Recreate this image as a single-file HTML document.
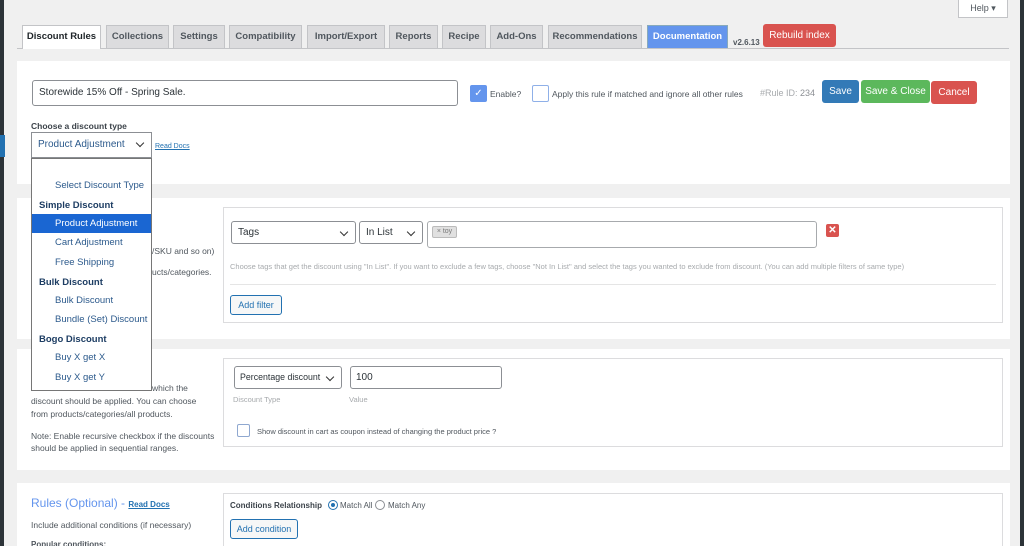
<!DOCTYPE html>
<html><head><meta charset="utf-8"><style>
*{box-sizing:border-box;margin:0;padding:0}
html,body{width:1024px;height:546px;overflow:hidden}
body{background:#f0f0f0;font-family:"Liberation Sans",sans-serif;position:relative;color:#3c434a}
.a{position:absolute}
.tab{position:absolute;top:25px;height:23px;background:#dcdcde;border:1px solid #c3c4c7;border-bottom:none;font-size:9.5px;font-weight:bold;color:#50575e;text-align:center;line-height:22px;white-space:nowrap}
.panel{position:absolute;left:17px;width:993px;background:#fff}
.box{position:absolute;left:223px;width:780px;border:1px solid #dcdcde;background:#fff}
.sel{position:absolute;border:1px solid #8c8f94;border-radius:3px;background:#fff;font-size:10px;color:#2c3338;padding-left:6px;line-height:21px;white-space:nowrap;overflow:hidden}
.sel:after{content:"";position:absolute;right:8px;top:7px;width:5px;height:5px;border-right:1.5px solid #333;border-bottom:1.5px solid #333;transform:rotate(45deg)}
.btn{position:absolute;border-radius:3px;color:#fff;font-size:10px;display:flex;align-items:center;justify-content:center;white-space:nowrap}
.ob{position:absolute;border:1px solid #2271b1;border-radius:3px;color:#2271b1;font-size:9px;background:#f6f7f7;display:flex;align-items:center;justify-content:center}
.t{position:absolute;font-size:8.5px;color:#50575e;white-space:nowrap}
.dd div{height:19.7px;line-height:19px;font-size:9.5px;color:#2c5a8c;padding-left:23px;white-space:nowrap}
.dd div.g{font-weight:bold;color:#1d3d63;padding-left:7px;height:18px;line-height:19px}
</style></head><body>
<div class="a" style="left:0;top:0;width:4px;height:546px;background:#2c3338"></div>
<div class="a" style="left:0;top:135px;width:5px;height:22px;background:#2271b1"></div>
<div class="a" style="left:1020px;top:0;width:4px;height:546px;background:#2c3338"></div>
<div class="a" style="left:958px;top:0;width:50px;height:18px;background:#fff;border:1px solid #c3c4c7;border-top:none;font-size:9px;color:#50575e;line-height:16px;text-align:center">Help ▾</div>
<div class="a" style="left:17px;top:48px;width:992px;height:1px;background:#c3c4c7"></div>
<div class="tab" style="left:22px;width:79px;background:#fff;color:#1d2327;height:24px">Discount Rules</div>
<div class="tab" style="left:106px;width:63px">Collections</div>
<div class="tab" style="left:173px;width:52px">Settings</div>
<div class="tab" style="left:229px;width:73px">Compatibility</div>
<div class="tab" style="left:307px;width:78px">Import/Export</div>
<div class="tab" style="left:389px;width:49px">Reports</div>
<div class="tab" style="left:442px;width:44px">Recipe</div>
<div class="tab" style="left:490px;width:53px">Add-Ons</div>
<div class="tab" style="left:548px;width:94px">Recommendations</div>
<div class="tab" style="left:647px;width:81px;background:#6495ed;color:#fff;border-color:#8ab">Documentation</div>
<div class="t" style="left:733px;top:38px;font-size:8px;font-weight:bold;color:#50575e">v2.6.13</div>
<div class="btn" style="left:763px;top:24px;width:73px;height:23px;background:#d9534f">Rebuild index</div>

<div class="panel" style="top:61px;height:123px"></div>
<div class="a" style="left:32px;top:80px;width:426px;height:26px;border:1px solid #8c8f94;border-radius:3px;font-size:10px;color:#2c3338;line-height:24px;padding-left:6px;background:#fff">Storewide 15% Off - Spring Sale.</div>
<div class="a" style="left:470px;top:85px;width:17px;height:17px;background:#6495ed;border-radius:2px;color:#fff;font-size:10px;text-align:center;line-height:17px">✓</div>
<div class="t" style="left:490px;top:89px">Enable?</div>
<div class="a" style="left:532px;top:85px;width:17px;height:17px;border:1px solid #8fb0e8;border-radius:2px;background:#fff"></div>
<div class="t" style="left:552px;top:89px">Apply this rule if matched and ignore all other rules</div>
<div class="t" style="left:760px;top:88px;color:#a7aaad;font-size:9px">#Rule ID: <span style="color:#8c8f94">234</span></div>
<div class="btn" style="left:822px;top:80px;width:37px;height:23px;background:#337ab7">Save</div>
<div class="btn" style="left:861px;top:80px;width:69px;height:23px;background:#5cb85c">Save &amp; Close</div>
<div class="btn" style="left:931px;top:81px;width:46px;height:23px;background:#d9534f">Cancel</div>
<div class="t" style="left:31px;top:121px;font-weight:bold;color:#3c434a">Choose a discount type</div>
<div class="sel" style="left:31px;top:132px;width:121px;height:26px;border-radius:0;line-height:24px;color:#2c5a8c">Product Adjustment</div>
<div class="t" style="left:155px;top:143px;font-size:7px;color:#2271b1;text-decoration:underline">Read Docs</div>

<div class="panel" style="top:198px;height:141px"></div>
<div class="t" style="left:152px;top:246px">/SKU and so on)</div>
<div class="t" style="left:152px;top:267px">ucts/categories.</div>
<div class="box" style="top:207px;height:116px"></div>
<div class="sel" style="left:231px;top:221px;width:125px;height:23px">Tags</div>
<div class="sel" style="left:359px;top:221px;width:64px;height:23px">In List</div>
<div class="a" style="left:427px;top:221px;width:390px;height:27px;border:1px solid #a7aaad;border-radius:3px"></div>
<div class="a" style="left:432px;top:226px;width:25px;height:12px;background:#e0e0e0;border:1px solid #bbb;border-radius:2px;font-size:7px;color:#777;line-height:10px;text-align:center">× toy</div>
<div class="a" style="left:826px;top:224px;width:13px;height:13px;background:#d9534f;border-radius:2px;color:#fff;font-size:10px;font-weight:bold;text-align:center;line-height:13px">✕</div>
<div class="t" style="left:230px;top:262px;font-size:7.5px;color:#a7aaad">Choose tags that get the discount using "In List". If you want to exclude a few tags, choose "Not In List" and select the tags you wanted to exclude from discount. (You can add multiple filters of same type)</div>
<div class="a" style="left:230px;top:284px;width:766px;height:1px;background:#e5e5e5"></div>
<div class="ob" style="left:230px;top:295px;width:52px;height:20px">Add filter</div>

<div class="panel" style="top:349px;height:121px"></div>
<div class="t" style="left:152px;top:383px;font-size:8.5px">which the</div>
<div class="t" style="left:31px;top:396px">discount should be applied. You can choose</div>
<div class="t" style="left:31px;top:409px">from products/categories/all products.</div>
<div class="t" style="left:31px;top:431px">Note: Enable recursive checkbox if the discounts</div>
<div class="t" style="left:31px;top:443px">should be applied in sequential ranges.</div>
<div class="box" style="top:358px;height:89px"></div>
<div class="sel" style="left:234px;top:366px;width:108px;height:23px;padding-left:5px;font-size:8.8px">Percentage discount</div>
<div class="a" style="left:350px;top:366px;width:152px;height:23px;border:1px solid #8c8f94;border-radius:3px;font-size:10px;color:#2c3338;line-height:21px;padding-left:5px">100</div>
<div class="t" style="left:233px;top:395px;font-size:7.5px;color:#a7aaad">Discount Type</div>
<div class="t" style="left:349px;top:395px;font-size:7.5px;color:#a7aaad">Value</div>
<div class="a" style="left:237px;top:424px;width:13px;height:13px;border:1px solid #8fa8d0;border-radius:2px"></div>
<div class="t" style="left:257px;top:427px;font-size:7.5px">Show discount in cart as coupon instead of changing the product price ?</div>

<div class="panel" style="top:483px;height:63px"></div>
<div class="t" style="left:31px;top:496px;font-size:12px;color:#6495ed">Rules (Optional) - <span style="font-size:8px;color:#2271b1;text-decoration:underline;font-weight:bold">Read Docs</span></div>
<div class="t" style="left:31px;top:520px">Include additional conditions (if necessary)</div>
<div class="t" style="left:31px;top:540px;font-weight:bold;font-size:8px">Popular conditions:</div>
<div class="box" style="top:493px;height:60px"></div>
<div class="t" style="left:230px;top:501px;font-weight:bold;font-size:8px;color:#3c434a">Conditions Relationship</div>
<div class="a" style="left:328px;top:500px;width:10px;height:10px;border:1px solid #2271b1;border-radius:50%"><div class="a" style="left:2px;top:2px;width:4px;height:4px;border-radius:50%;background:#2271b1"></div></div>
<div class="t" style="left:340px;top:501px;font-size:8px">Match All</div>
<div class="a" style="left:375px;top:500px;width:10px;height:10px;border:1px solid #8c8f94;border-radius:50%"></div>
<div class="t" style="left:388px;top:501px;font-size:8px">Match Any</div>
<div class="ob" style="left:230px;top:519px;width:68px;height:20px">Add condition</div>

<div class="a dd" style="left:31px;top:158px;width:121px;height:233px;background:#fff;border:1px solid #767676;padding-top:17px">
<div>Select Discount Type</div>
<div class="g">Simple Discount</div>
<div style="background:#1a66d2;color:#fff">Product Adjustment</div>
<div>Cart Adjustment</div>
<div>Free Shipping</div>
<div class="g">Bulk Discount</div>
<div>Bulk Discount</div>
<div>Bundle (Set) Discount</div>
<div class="g">Bogo Discount</div>
<div>Buy X get X</div>
<div>Buy X get Y</div>
</div>
</body></html>
